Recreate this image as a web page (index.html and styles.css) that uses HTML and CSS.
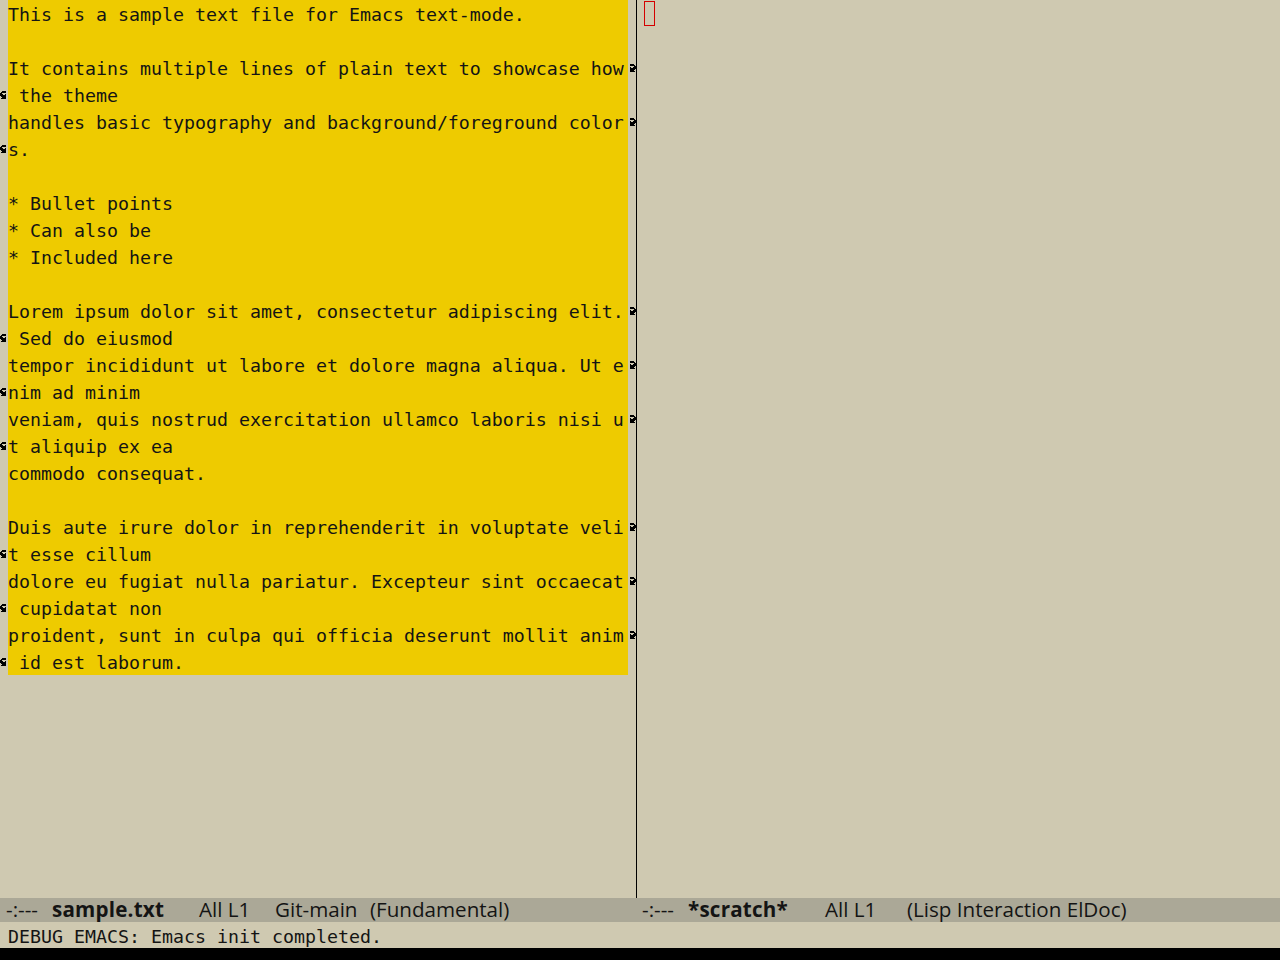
FILE: index.html
```html
<!DOCTYPE html>
<html lang="en">
  <head>
    <meta charset="UTF-8" />
    <title>emacs</title>
    <link rel="stylesheet" href="styles.css">
  </head>
  <body>
    <!-- fringe bitmaps (8x8, same as the emacs curly arrows) -->
    <svg class="defs" width="0" height="0" aria-hidden="true">
      <symbol id="curly-right" viewBox="0 0 8 8">
        <path d="M2 0h4v1h-4z M2 1h5v1h-5z M6 2h2v1h-2z M2 3h1v1h-1z M5 3h3v1h-3z M2 4h6v1h-6z M2 5h5v1h-5z M2 6h4v1h-4z M2 7h5v1h-5z" />
      </symbol>
      <symbol id="curly-left" viewBox="0 0 8 8">
        <path d="M2 0h4v1h-4z M1 1h5v1h-5z M0 2h2v1h-2z M0 3h3v1h-3z M5 3h1v1h-1z M0 4h6v1h-6z M1 5h5v1h-5z M2 6h4v1h-4z M1 7h5v1h-5z" />
      </symbol>
    </svg>

    <div class="frame">
      <div class="windows">
        <!-- sample.txt -->
        <div class="window window-left">
          <div class="line"><span class="fringe"></span><span class="text hl">This is a sample text file for Emacs text-mode.</span><span class="fringe"></span></div>
          <div class="line"><span class="fringe"></span><span class="text hl"></span><span class="fringe"></span></div>
          <div class="line"><span class="fringe"></span><span class="text hl">It contains multiple lines of plain text to showcase how</span><span class="fringe"><svg class="arrow"><use href="#curly-right" /></svg></span></div>
          <div class="line"><span class="fringe"><svg class="arrow"><use href="#curly-left" /></svg></span><span class="text hl"> the theme</span><span class="fringe"></span></div>
          <div class="line"><span class="fringe"></span><span class="text hl">handles basic typography and background/foreground color</span><span class="fringe"><svg class="arrow"><use href="#curly-right" /></svg></span></div>
          <div class="line"><span class="fringe"><svg class="arrow"><use href="#curly-left" /></svg></span><span class="text hl">s.</span><span class="fringe"></span></div>
          <div class="line"><span class="fringe"></span><span class="text hl"></span><span class="fringe"></span></div>
          <div class="line"><span class="fringe"></span><span class="text hl">* Bullet points</span><span class="fringe"></span></div>
          <div class="line"><span class="fringe"></span><span class="text hl">* Can also be</span><span class="fringe"></span></div>
          <div class="line"><span class="fringe"></span><span class="text hl">* Included here</span><span class="fringe"></span></div>
          <div class="line"><span class="fringe"></span><span class="text hl"></span><span class="fringe"></span></div>
          <div class="line"><span class="fringe"></span><span class="text hl">Lorem ipsum dolor sit amet, consectetur adipiscing elit.</span><span class="fringe"><svg class="arrow"><use href="#curly-right" /></svg></span></div>
          <div class="line"><span class="fringe"><svg class="arrow"><use href="#curly-left" /></svg></span><span class="text hl"> Sed do eiusmod</span><span class="fringe"></span></div>
          <div class="line"><span class="fringe"></span><span class="text hl">tempor incididunt ut labore et dolore magna aliqua. Ut e</span><span class="fringe"><svg class="arrow"><use href="#curly-right" /></svg></span></div>
          <div class="line"><span class="fringe"><svg class="arrow"><use href="#curly-left" /></svg></span><span class="text hl">nim ad minim</span><span class="fringe"></span></div>
          <div class="line"><span class="fringe"></span><span class="text hl">veniam, quis nostrud exercitation ullamco laboris nisi u</span><span class="fringe"><svg class="arrow"><use href="#curly-right" /></svg></span></div>
          <div class="line"><span class="fringe"><svg class="arrow"><use href="#curly-left" /></svg></span><span class="text hl">t aliquip ex ea</span><span class="fringe"></span></div>
          <div class="line"><span class="fringe"></span><span class="text hl">commodo consequat.</span><span class="fringe"></span></div>
          <div class="line"><span class="fringe"></span><span class="text hl"></span><span class="fringe"></span></div>
          <div class="line"><span class="fringe"></span><span class="text hl">Duis aute irure dolor in reprehenderit in voluptate veli</span><span class="fringe"><svg class="arrow"><use href="#curly-right" /></svg></span></div>
          <div class="line"><span class="fringe"><svg class="arrow"><use href="#curly-left" /></svg></span><span class="text hl">t esse cillum</span><span class="fringe"></span></div>
          <div class="line"><span class="fringe"></span><span class="text hl">dolore eu fugiat nulla pariatur. Excepteur sint occaecat</span><span class="fringe"><svg class="arrow"><use href="#curly-right" /></svg></span></div>
          <div class="line"><span class="fringe"><svg class="arrow"><use href="#curly-left" /></svg></span><span class="text hl"> cupidatat non</span><span class="fringe"></span></div>
          <div class="line"><span class="fringe"></span><span class="text hl">proident, sunt in culpa qui officia deserunt mollit anim</span><span class="fringe"><svg class="arrow"><use href="#curly-right" /></svg></span></div>
          <div class="line"><span class="fringe"><svg class="arrow"><use href="#curly-left" /></svg></span><span class="text hl"> id est laborum.</span><span class="fringe"></span></div>
        </div>

        <div class="divider"></div>

        <!-- *scratch* (empty, cursor not selected -> hollow box) -->
        <div class="window window-right">
          <div class="line"><span class="fringe"></span><span class="text"><span class="cursor"></span></span></div>
        </div>
      </div>

      <div class="mode-lines">
        <div class="mode-line mode-line-left">
          <span class="ml-status">-:---</span>
          <span class="ml-buffer">sample.txt</span>
          <span class="ml-pos">All L1</span>
          <span class="ml-vc">Git-main</span>
          <span class="ml-mode">(Fundamental)</span>
        </div>
        <div class="mode-line mode-line-right">
          <span class="ml-status">-:---</span>
          <span class="ml-buffer">*scratch*</span>
          <span class="ml-pos">All L1</span>
          <span class="ml-mode">(Lisp Interaction ElDoc)</span>
        </div>
      </div>

      <div class="echo-area">DEBUG EMACS: Emacs init completed.</div>
    </div>
  </body>
</html>
```

FILE: styles.css
```css
/* emacs frame, 1280x960 */
html,
body {
  margin: 0;
  padding: 0;
  background-color: #000;
}

.defs {
  position: absolute;
  width: 0;
  height: 0;
}

.frame {
  display: flex;
  flex-direction: column;
  width: 1280px;
  height: 948px;
  background-color: #cfc9b1;
  color: #141414;
  font-family: "DejaVu Sans Mono", monospace;
  font-size: 18.27px;
  line-height: 27px;
}

.windows {
  display: flex;
  height: 898px;
}

.window {
  display: flex;
  flex-direction: column;
}

.window-left {
  width: 636px;
}

.window-right {
  flex: 1;
}

/* vertical border between the two windows */
.divider {
  width: 1px;
  background-color: #000;
}

.line {
  display: flex;
  height: 27px;
}

.fringe {
  display: flex;
  align-items: center;
  width: 8px;
  flex-shrink: 0;
}

.arrow {
  display: block;
  width: 8px;
  height: 8px;
  fill: #000;
  shape-rendering: crispEdges;
}

.text {
  flex: 1;
  white-space: pre;
  padding-top: 1px;
  box-sizing: border-box;
}

/* whole-line highlight */
.hl {
  background-color: #eecb00;
}

.cursor {
  display: block;
  width: 11px;
  height: 25px;
  margin-left: -1px;
  box-sizing: border-box;
  border: 1px solid #d40000;
}

/* mode lines */
.mode-lines {
  display: flex;
  height: 24px;
  background-color: #aba897;
  font-family: "Open Sans", sans-serif;
  font-size: 20.6px;
  line-height: 23px;
  color: #141414;
}

.mode-line {
  display: flex;
  white-space: pre;
}

.mode-line-left {
  width: 637px;
  padding-left: 6px;
  box-sizing: border-box;
}

.mode-line-right {
  flex: 1;
  padding-left: 5px;
}

.ml-status {
  width: 46px;
}

.ml-buffer {
  font-weight: 700;
  letter-spacing: 0.2px;
}

.mode-line-left .ml-buffer {
  width: 147px;
}

.mode-line-left .ml-pos {
  width: 76px;
}

.mode-line-left .ml-vc {
  width: 95px;
}

.mode-line-right .ml-buffer {
  width: 137px;
}

.mode-line-right .ml-pos {
  width: 82px;
}

.echo-area {
  height: 26px;
  padding-top: 1px;
  padding-left: 8px;
  box-sizing: border-box;
  white-space: pre;
}
```
